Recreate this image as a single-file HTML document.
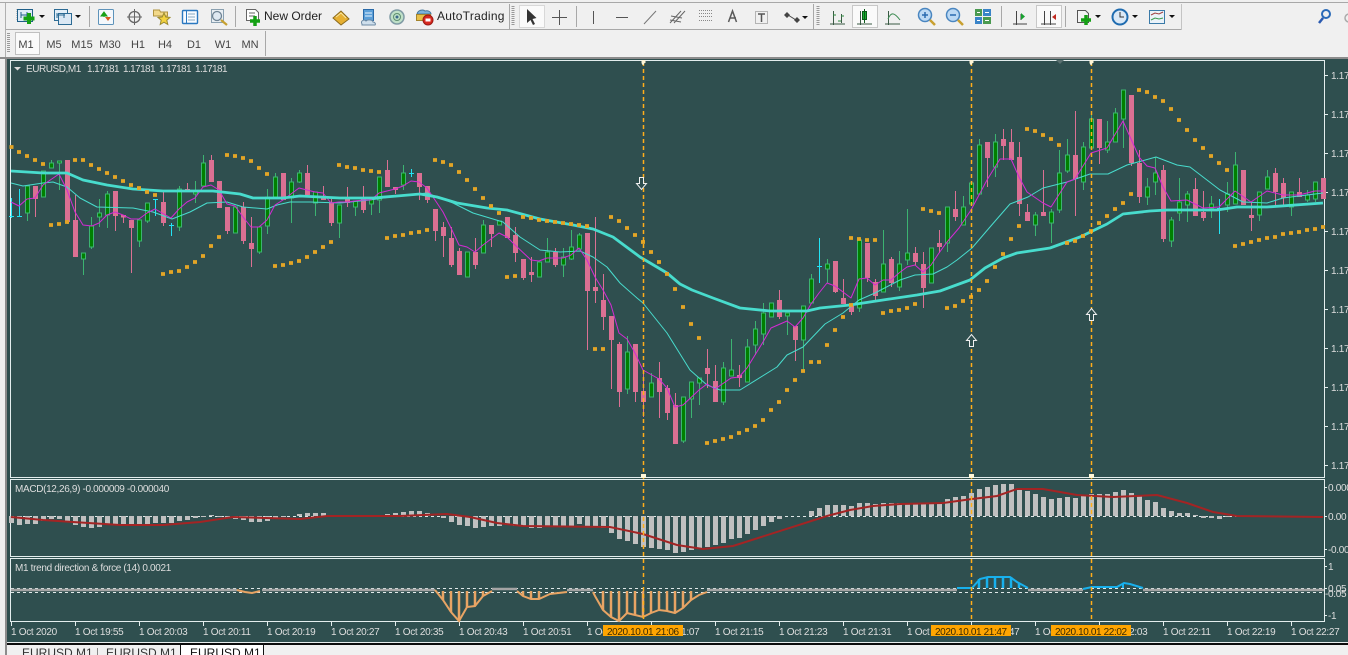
<!DOCTYPE html>
<html><head><meta charset="utf-8"><title>EURUSD,M1</title>
<style>
html,body{margin:0;padding:0;width:1348px;height:655px;overflow:hidden;background:#f0f0f0}
svg{display:block;font-family:"Liberation Sans",sans-serif}
.c{font-size:10px;fill:#dedede;letter-spacing:-.3px}
.t{font-size:11px;fill:#444}
.b{font-size:12px;fill:#222}
.o{font-size:10px;fill:#3a2a00;letter-spacing:-.1px}
</style></head><body>
<svg width="1348" height="655" viewBox="0 0 1348 655" xmlns="http://www.w3.org/2000/svg">
<!-- window chrome -->
<rect width="1348" height="655" fill="#f0f0f0"/>
<rect x="0" y="2" width="1348" height="1" fill="#a8a8a8"/>
<rect x="6" y="29" width="1175" height="1" fill="#a8a8a8"/>
<rect x="1181" y="4" width="1" height="26" fill="#c4c4c4"/>
<rect x="5" y="3" width="1" height="55" fill="#b0b0b0"/>
<rect x="0" y="57" width="1348" height="2" fill="#8c8c8c"/>
<rect x="5" y="57" width="2" height="598" fill="#8c8c8c"/>
<path d="M18 9v11M8.500 33v20M513 6v19M818 6v19" stroke="#999" stroke-width="3" stroke-dasharray="1 1"/>
<path d="M89.500 6v21M235.500 6v21M509.500 4v25M576.500 6v21M813.500 4v25M1001.500 6v21M1065.500 6v21M265.500 31v25" stroke="#a8a8a8"/>
<!-- selected buttons -->
<rect x="15.500" y="32.500" width="24" height="22" fill="#fafafa" stroke="#c0c0c0"/>
<rect x="519.500" y="5.500" width="25" height="22" fill="#fafafa" stroke="#d8d8d8"/>
<rect x="852.500" y="5.500" width="25" height="22" fill="#fafafa" stroke="#c8c8c8"/>
<rect x="1036.500" y="5.500" width="25" height="22" fill="#fafafa" stroke="#c8c8c8"/>
<!-- toolbar icons -->
<g fill="none">
<rect x="17.500" y="9.500" width="15" height="12" fill="#dcebf7" stroke="#1f5f88"/>
<path d="M21 12v6M21 15h7M27 12v6" stroke="#1f5f88"/>
<path d="M29 13v11M23.500 18.500h11" stroke="#14a014" stroke-width="4"/>
<path d="M39 15h6l-3 3z" fill="#111"/>
<rect x="54.500" y="9.500" width="13" height="11" fill="#e4eff8" stroke="#2c6b94"/>
<rect x="58.500" y="13.500" width="13" height="11" fill="#dbe8f4" stroke="#2c6b94"/>
<path d="M57 13v5M57 15h8M64 13v5" stroke="#2c6b94"/>
<path d="M75 15h6l-3 3z" fill="#111"/>
<rect x="98.500" y="9.500" width="15" height="15" rx="1" fill="#f4f8fc" stroke="#5e93ba"/>
<path d="M104 12l3 4h-6zM104 15v2" fill="#18a018" stroke="#18a018"/>
<path d="M108 21l-3-4h6z" fill="#d85a20"/>
<circle cx="134.500" cy="17" r="5.500" stroke="#666" stroke-width="1.300"/>
<path d="M134.500 9v16M127 17h15" stroke="#666"/>
<path d="M153.500 10h6l1 2h7v4h-14z" fill="#f2d98a" stroke="#b09440"/>
<path d="M164 13l1.800 4 4.200.400-3.200 2.800 1 4.300-3.800-2.300-3.800 2.300 1-4.300-3.200-2.800 4.200-.400z" fill="#f4d340" stroke="#9a8a30"/>
<rect x="182.500" y="10.500" width="15" height="13" rx="1" fill="#f8fbff" stroke="#2a78c0" stroke-width="1.400"/>
<path d="M186.500 11v12" stroke="#2a78c0"/>
<path d="M188 14h7M188 17h7M188 20h7" stroke="#89a8c0"/>
<rect x="211.500" y="9.500" width="12" height="13" fill="#e8eef3" stroke="#8aa0b0"/>
<circle cx="217" cy="16" r="4.500" fill="#dfe9f2" stroke="#6f8494" stroke-width="1.300"/>
<path d="M221 20l6 5" stroke="#c6a030" stroke-width="2.200"/>
<path d="M246.500 9.500h9l3 3v8h-12z" fill="#fff" stroke="#666"/>
<path d="M249 13h6M249 16h6" stroke="#666"/>
<path d="M255 16v10M250 21h10" stroke="#14a014" stroke-width="3.500"/>
<path d="M333 18l8-7 8 8-8 6z" fill="#e6b033" stroke="#8a6a1e"/>
<path d="M336 17l5-4 5 5" stroke="#f8e6a0"/>
<rect x="363.500" y="9.500" width="10" height="11" fill="#5b9fd8" stroke="#2a6aa8"/>
<path d="M365 13h7M365 16h7" stroke="#e8f4ff"/>
<path d="M362 24c-2-3 2-5 4-3 2-2 7-1 7 1 2 0 3 2 2 3h-13z" fill="#cfdfec" stroke="#6c8aa4"/>
<circle cx="397" cy="17" r="7" fill="#bfe0c8" stroke="#7f9aa4" stroke-width="1.500"/>
<circle cx="397" cy="17" r="3.500" stroke="#5f8f70"/>
<circle cx="397" cy="17" r="1.500" fill="#3c6a8a"/>
<path d="M417 14c1-4 6-5 8-3 3-1 6 1 6 3z" fill="#7db4dc" stroke="#48789c"/>
<rect x="416.500" y="14.500" width="14" height="6" fill="#e8c048" stroke="#a4842c"/>
<circle cx="428" cy="20" r="5" fill="#d82a20" stroke="#9a1a14"/>
<rect x="425.500" y="18.500" width="5" height="3" fill="#fff"/>
<!-- cursor & drawing tools -->
<path d="M527 9v14l3.500-3 2.500 5 2-1-2.500-5 4-1z" fill="#333"/>
<path d="M559.500 10v15M552 17.500h15" stroke="#555"/>
<path d="M593.500 11v13" stroke="#555"/>
<path d="M616 17.500h12" stroke="#555"/>
<path d="M644 24l12-13" stroke="#777"/>
<path d="M670 23l11-12M674 23l11-12M671 16l11 2M670 20l11 2" stroke="#666"/>
<path d="M699 10.500h13M699 13.500h13M699 16.500h13M699 20.500h13" stroke="#888" stroke-dasharray="1 1"/>
<path d="M728.500 22l4-11 4 11M730 18h6" stroke="#5a5a5a" stroke-width="1.500"/>
<rect x="755.500" y="11.500" width="12" height="12" stroke="#777" stroke-dasharray="1 1"/>
<path d="M758 14h7M761.500 14v8" stroke="#555" stroke-width="1.500"/>
<path d="M787 12l3 3-3 3-3-3zM797 17l3 3-3 3-3-3z" fill="#444"/>
<path d="M788 15l8 5" stroke="#444"/>
<path d="M802 16h6l-3 3z" fill="#111"/>
<!-- chart types -->
<path d="M830 24h15M833.500 11v14M841.500 14v9" stroke="#3a5a44"/>
<path d="M833 15h3M838 21h3M841 16h3" stroke="#2a8a3a"/>
<path d="M857 24h15M860.500 11v14" stroke="#3a5a44"/>
<rect x="862.500" y="11.500" width="4" height="8" fill="#18b030" stroke="#0a5a18"/>
<path d="M864.500 9v14" stroke="#0a5a18"/>
<path d="M885 24h15M888.500 11v14" stroke="#3a5a44"/>
<path d="M888 19c3-7 6-7 12 1" stroke="#3a8a50"/>
<!-- zoom -->
<circle cx="925" cy="15" r="6.500" fill="#bcd9f4" stroke="#4a86c0" stroke-width="1.500"/>
<path d="M922 15h6M925 12v6" stroke="#2a6ab0" stroke-width="1.500"/>
<path d="M930 20l5 5" stroke="#c8a030" stroke-width="2.500"/>
<circle cx="953" cy="15" r="6.500" fill="#bcd9f4" stroke="#4a86c0" stroke-width="1.500"/>
<path d="M950 15h6" stroke="#2a6ab0" stroke-width="1.500"/>
<path d="M958 20l5 5" stroke="#c8a030" stroke-width="2.500"/>
<rect x="975" y="9" width="7" height="7" fill="#4a9a50"/><rect x="983" y="9" width="8" height="7" fill="#3a84c8"/>
<rect x="975" y="17" width="7" height="7" fill="#3a84c8"/><rect x="983" y="17" width="8" height="7" fill="#4a9a50"/>
<path d="M977 12.500h3M985 12.500h4M977 20.500h3M985 20.500h4" stroke="#fff"/>
<path d="M1013 24h14M1016.500 11v14M1021 14v6" stroke="#444"/>
<path d="M1021 13l4 3.500-4 3.500z" fill="#18a030"/>
<path d="M1041 24h15M1044.500 11v14M1050.500 11v14" stroke="#444"/>
<path d="M1056 14l-4 3 4 3z" fill="#c02a20"/>
<path d="M1077.500 10.500h8l3 3v9h-11z" fill="#f4f4f4" stroke="#555"/>
<path d="M1086 15v10M1081 20h10" stroke="#14a014" stroke-width="3.500"/>
<path d="M1095 15h6l-3 3z" fill="#111"/>
<circle cx="1120" cy="17" r="7.500" fill="#dbe9f6" stroke="#1f6cb0" stroke-width="2"/>
<path d="M1120 12v5h4" stroke="#333"/>
<path d="M1132 15h6l-3 3z" fill="#111"/>
<rect x="1149.500" y="10.500" width="15" height="13" fill="#eaf2f9" stroke="#3a7aa8"/>
<path d="M1151 15l4-2 4 1 4-2" stroke="#a04040"/><path d="M1151 20l4-2 4 1 4-1" stroke="#3a9a50"/>
<path d="M1169 15h6l-3 3z" fill="#111"/>
<circle cx="1326" cy="14" r="4" stroke="#2a6ab8" stroke-width="2"/>
<path d="M1323 18l-4 5" stroke="#2a5ab0" stroke-width="2.500"/>
<circle cx="1349" cy="18" r="4" stroke="#aaa" stroke-width="1.500"/>
</g>
<text x="264" y="20" class="b">New Order</text>
<text x="437" y="20" class="b" letter-spacing=".25">AutoTrading</text>
<g class="t" text-anchor="middle">
<text x="26" y="48">M1</text><text x="54" y="48">M5</text><text x="82" y="48">M15</text><text x="110" y="48">M30</text><text x="138" y="48">H1</text><text x="165" y="48">H4</text><text x="194" y="48">D1</text><text x="223" y="48">W1</text><text x="250" y="48">MN</text>
</g>

<!-- chart background -->
<rect x="7" y="59" width="1341" height="583" fill="#2f4f4f"/>
<g fill="none" stroke="#e4eeee">
<path d="M10.500 60.500H1324.500V477.500H10.500ZM10.500 479.500H1324.500V556.500H10.500ZM10.500 558.500H1324.500V621.500H10.500Z"/>
<path d="M1324 75.500h4M1324 114.500h4M1324 153.500h4M1324 192.500h4M1324 231.500h4M1324 270.500h4M1324 309.500h4M1324 348.500h4M1324 387.500h4M1324 426.500h4M1324 465.500h4M1324 487.500h3M1324 516.500h3M1324 549.500h3M1324 566.500h3M1324 588.500h3M1324 615.500h3"/>
<path d="M11.500 621v5M75.500 621v5M139.500 621v5M203.500 621v5M267.500 621v5M331.500 621v5M395.500 621v5M459.500 621v5M523.500 621v5M587.500 621v5M651.500 621v5M715.500 621v5M779.500 621v5M843.500 621v5M907.500 621v5M971.500 621v5M1035.500 621v5M1099.500 621v5M1163.500 621v5M1227.500 621v5M1291.500 621v5"/>
</g>
<path d="M1056 60h8l-4 4z" fill="#5a7070"/>

<!-- wicks -->
<g fill="none" stroke-width="1" shape-rendering="crispEdges">
<path stroke="#db7093" d="M35.500 186V217M67.500 160V224M75.500 195V257M115.500 191V231M123.500 215V223M131.500 220V273M163.500 190V226M187.500 183V192M211.500 155V182M227.500 207V234M243.500 202V244M251.500 217V267M307.500 165V195M323.500 186V200M331.500 199V226M347.500 187V207M363.500 186V213M387.500 160V187M395.500 187V194M419.500 173V200M427.500 186V203M435.500 209V241M443.500 222V257M451.500 227V267M459.500 248V275M475.500 238V269M491.500 225V247M515.500 227V262M523.500 259V280M531.500 257V282M555.500 248V267M587.500 233V350M595.500 217V303M603.500 274V330M611.500 316V389M619.500 342V407M635.500 344V402M643.500 373V417M659.500 362V418M667.500 385V420M675.500 393V444M707.500 349V388M715.500 365V402M739.500 365V387M779.500 290V319M795.500 326V361M835.500 261V293M843.500 279V304M851.500 304V315M867.500 243V282M875.500 279V301M891.500 257V287M915.500 247V265M923.500 252V308M939.500 230V253M955.500 191V221M987.500 142V187M1003.500 129V160M1011.500 129V160M1019.500 142V216M1027.500 204V221M1043.500 170V216M1075.500 111V216M1099.500 119V164M1131.500 95V166M1139.500 150V203M1163.500 165V242M1195.500 178V216M1203.500 191V221M1251.500 202V231M1275.500 168V205M1283.500 178V205M1299.500 178V197"/>
<path stroke="#3cb371" d="M27.500 186V221M51.500 160V168M59.500 161V190M83.500 253V275M91.500 217V249M99.500 199V227M107.500 191V228M139.500 220V247M147.500 203V223M179.500 186V231M195.500 181V203M203.500 155V187M259.500 227V254M267.500 189V234M275.500 173V198M291.500 178V223M299.500 170V183M315.500 192V216M339.500 205V238M355.500 201V216M371.500 199V215M379.500 177V213M403.500 165V190M483.500 220V253M547.500 238V262M563.500 248V277M571.500 230V260M579.500 233V249M627.500 336V394M651.500 373V397M683.500 397V443M691.500 382V418M699.500 378V405M723.500 362V405M731.500 339V376M747.500 339V382M755.500 321V355M763.500 303V345M787.500 313V335M803.500 306V370M811.500 274V303M827.500 259V283M859.500 237V312M883.500 230V292M899.500 251V291M907.500 209V265M947.500 207V252M963.500 196V225M979.500 139V194M995.500 134V177M1035.500 212V236M1051.500 209V243M1059.500 150V213M1067.500 139V173M1083.500 142V190M1091.500 111V148M1107.500 121V153M1115.500 108V142M1123.500 90V148M1147.500 178V205M1155.500 157V195M1171.500 217V247M1179.500 178V221M1187.500 191V222M1211.500 196V218M1227.500 182V212M1235.500 152V204M1259.500 192V221M1267.500 170V189M1291.500 192V216M1307.500 190V202M1315.500 182V202"/>
<!-- pink bodies -->
<path stroke="#db7093" stroke-width="5" d="M35.500 186V199M67.500 160V222M75.500 220V257M115.500 191V216M123.500 215V217.500M131.500 220V228M163.500 202V223M187.500 189V192M211.500 160V182M219.500 181V208M227.500 207V231M243.500 207V241M251.500 243V249M283.500 173V200M307.500 173V195M323.500 198V200M331.500 203V223M347.500 199V203M363.500 199V210M387.500 170V187M395.500 187V190M419.500 173V187M427.500 186V200M435.500 209V231M443.500 227V236M451.500 238V265M459.500 251V275M475.500 252V265M491.500 225V234M507.500 217V238M515.500 235V253M523.500 259V278M531.500 272V275M555.500 252V265M587.500 233V291M595.500 287V291M603.500 300V317M611.500 316V340M619.500 344V392M635.500 344V392M643.500 391V402M659.500 378V392M667.500 388V413M675.500 405V444M707.500 368V374M715.500 381V402M739.500 375V378M779.500 300V317M795.500 326V340M835.500 261V292M843.500 298V304M851.500 304V312M867.500 243V278M875.500 282V296M891.500 259V283M915.500 253V262M923.500 264V288M939.500 243V247M955.500 209V217M987.500 142V158M1003.500 139V146M1011.500 142V160M1019.500 157V204M1027.500 212V221M1043.500 212V216M1075.500 155V179M1099.500 119V148M1131.500 95V163M1139.500 163V197M1163.500 170V239M1195.500 189V216M1203.500 212V218M1243.500 170V205M1251.500 215V218M1275.500 173V192M1283.500 183V198M1299.500 192V197M1323.500 178V199"/>
<!-- green bodies -->
<path fill="#008000" stroke="#3cb371" d="M25.500 186h4v27h-4zM41.500 171h4v26h-4zM49.500 163h4v5h-4zM57.500 161h4v2h-4zM81.500 253h4v6h-4zM89.500 226h4v21h-4zM97.500 213h4v4h-4zM105.500 194h4v21h-4zM137.500 220h4v21h-4zM145.500 203h4v18h-4zM177.500 189h4v38h-4zM193.500 192h4v2h-4zM201.500 163h4v23h-4zM233.500 207h4v26h-4zM257.500 227h4v25h-4zM265.500 197h4v29h-4zM273.500 177h4v20h-4zM289.500 182h4v16h-4zM297.500 173h4v9h-4zM313.500 192h4v11h-4zM337.500 205h4v18h-4zM353.500 201h4v6h-4zM369.500 199h4v5h-4zM377.500 177h4v23h-4zM401.500 173h4v12h-4zM465.500 252h4v25h-4zM481.500 225h4v28h-4zM497.500 221h4v4h-4zM537.500 262h4v15h-4zM545.500 252h4v10h-4zM561.500 257h4v8h-4zM569.500 247h4v12h-4zM577.500 235h4v14h-4zM625.500 352h4v37h-4zM649.500 383h4v14h-4zM681.500 397h4v44h-4zM689.500 382h4v17h-4zM697.500 378h4v5h-4zM721.500 368h4v34h-4zM729.500 370h4v6h-4zM745.500 347h4v35h-4zM753.500 329h4v16h-4zM761.500 313h4v21h-4zM769.500 303h4v14h-4zM785.500 313h4v3h-4zM801.500 306h4v34h-4zM809.500 279h4v24h-4zM825.500 264h4v5h-4zM857.500 240h4v68h-4zM881.500 264h4v28h-4zM897.500 264h4v23h-4zM905.500 253h4v7h-4zM929.500 248h4v35h-4zM945.500 207h4v36h-4zM961.500 207h4v18h-4zM969.500 183h4v21h-4zM977.500 145h4v49h-4zM993.500 142h4v25h-4zM1033.500 215h4v10h-4zM1049.500 212h4v11h-4zM1057.500 173h4v37h-4zM1065.500 155h4v16h-4zM1081.500 147h4v35h-4zM1089.500 119h4v29h-4zM1105.500 142h4v8h-4zM1113.500 113h4v29h-4zM1121.500 90h4v29h-4zM1145.500 187h4v10h-4zM1153.500 173h4v9h-4zM1169.500 220h4v21h-4zM1177.500 202h4v11h-4zM1185.500 194h4v11h-4zM1209.500 204h4v4h-4zM1225.500 194h4v11h-4zM1233.500 165h4v39h-4zM1257.500 192h4v23h-4zM1265.500 177h4v12h-4zM1289.500 192h4v15h-4zM1305.500 195h4v5h-4zM1313.500 182h4v17h-4z"/>
<!-- doji -->
<path stroke="#22e4f4" d="M11.500 198V218M9 216.500h5M19.500 189V217M17 216.500h5M155.500 199V216M153 199.500h5M171.500 223V236M169 225.500h5M411.500 169V177M409 173.500h5M819.500 238V283M817 266.500h5M1219.500 199V234M1217 208.500h5"/>
</g>

<!-- moving averages -->
<g fill="none" stroke-linejoin="round">
<polyline stroke="#48dccd" stroke-width="1" points="11,183 23,186 43,183 53,182 67,187 80,198 97,207 133,208 153,212 172,219 190,212 207,203 227,202 243,207 267,209 277,205 290,202 310,202 340,203 370,200 397,196 427,193 453,203 473,213 503,222 520,237 540,250 560,252 580,251 593,257 607,267 620,283 637,298 643,303 667,333 690,370 707,385 720,390 740,390 777,367 787,355 803,347 825,324 843,313 859,300 875,293 900,280 915,275 933,274 947,267 957,260 972,248 990,227 1010,204 1028,197 1043,188 1067,182 1090,174 1108,174 1127,165 1156,157 1177,165 1190,167 1220,190 1243,202 1267,203 1283,198 1323,193"/>
<polyline stroke="#d42ad4" stroke-width="1" points="11,202 19,206 27,199 35,198 43,185 59,174 67,190 75,212 83,225 92,226 99,223 107,215 115,212 123,215 131,219 139,219 147,213 155,209 171,218 179,209 187,202 195,198 203,187 211,185 219,190 227,204 235,206 243,217 251,227 259,227 267,220 275,205 283,200 299,188 315,192 323,193 331,203 339,202 347,202 363,200 371,200 379,193 395,189 403,186 411,181 419,182 427,188 443,212 451,228 459,245 467,247 475,252 483,245 491,239 499,233 507,237 515,245 531,260 539,261 547,258 563,258 571,255 579,248 587,260 595,277 603,290 611,305 619,333 627,339 635,353 643,370 659,379 667,388 675,407 683,405 699,390 707,384 715,389 731,378 739,377 747,368 763,342 771,328 787,321 795,327 803,318 811,304 819,293 827,283 835,286 851,298 859,279 867,278 875,285 883,280 891,280 899,273 907,267 915,265 923,272 931,265 939,253 947,242 959,228 971,210 987,180 1000,159 1011,159 1019,177 1027,192 1043,203 1051,207 1067,182 1075,179 1091,153 1107,148 1123,121 1139,157 1147,166 1155,168 1163,187 1171,201 1187,200 1203,208 1219,207 1235,191 1251,202 1267,191 1283,195 1299,195 1315,191 1323,191"/>
<polyline stroke="#48dccd" stroke-width="2.800" points="11,171 43,173 67,173 83,180 107,185 133,189 163,191 200,191 213,191 240,194 253,198 283,198 300,196 340,198 373,198 397,196 420,194 437,197 457,203 487,208 507,210 540,219 573,225 593,229 613,237 640,257 667,273 680,284 692,290 713,298 740,308 770,311 807,311 820,308 850,305 883,300 917,295 940,291 970,280 985,268 1003,258 1017,253 1050,248 1080,237 1107,224 1123,214 1150,211 1167,210 1217,210 1237,207 1267,207 1323,203"/>
</g>

<!-- parabolic SAR -->
<path fill="none" stroke="#e3a526" stroke-width="3.800" stroke-linecap="butt" d="M9.500 147h4M17 152h4M25 156h4M33 160h4M41 164h4M49 225h4M57 224h4M65 222h4M73 160h4M81 160h4M89 165h4M97 169h4M105 173h4M113 177h4M121 181h4M129 185h4M137 188h4M145 192h4M153 195h4M161 274h4M169 272h4M177 271h4M185 267h4M193 262h4M201 256h4M209 246h4M217 237h4M225 155h4M233 156h4M241 158h4M249 161h4M257 168h4M265 174h4M273 266h4M281 265h4M289 263h4M297 261h4M305 257h4M313 252h4M321 247h4M329 242h4M337 165h4M345 167h4M353 168h4M361 170h4M369 171h4M377 172h4M385 238h4M393 236h4M401 235h4M409 233h4M417 232h4M425 230h4M433 160h4M441 162h4M449 165h4M457 172h4M465 180h4M473 189h4M481 198h4M489 206h4M497 213h4M505 277h4M513 276h4M521 217h4M529 218h4M537 220h4M545 221h4M553 222h4M561 223h4M569 224h4M577 225h4M585 226h4M593 349h4M601 349h4M609 217h4M617 221h4M625 228h4M633 235h4M641 242h4M649 252h4M657 262h4M665 274h4M673 289h4M681 307h4M689 324h4M697 338h4M705 443h4M713 441h4M721 439h4M729 437h4M737 433h4M745 430h4M753 426h4M761 420h4M769 410h4M777 402h4M785 390h4M793 380h4M801 371h4M809 362h4M817 362h4M825 345h4M833 330h4M841 317h4M849 305h4M849 238h4M857 239h4M865 240h4M873 240h4M881 313h4M889 311h4M897 310h4M905 308h4M913 304h4M921 209h4M929 211h4M937 213h4M945 308h4M953 306h4M961 301h4M969 297h4M977 290h4M985 281h4M993 267h4M1001 254h4M1009 239h4M1017 226h4M1025 129h4M1033 131h4M1041 135h4M1049 139h4M1057 145h4M1065 243h4M1073 241h4M1081 236h4M1089 231h4M1097 223h4M1105 216h4M1113 209h4M1121 203h4M1129 194h4M1137 90h4M1145 92h4M1153 97h4M1161 101h4M1169 109h4M1177 120h4M1185 130h4M1193 140h4M1201 148h4M1209 156h4M1217 163h4M1225 170h4M1233 246h4M1241 244h4M1249 242h4M1257 240h4M1265 238h4M1273 237h4M1281 234h4M1289 233h4M1297 232h4M1305 230h4M1313 229h4M1321 227h4"/>

<!-- MACD pane -->
<path d="M11 516.500H1324" stroke="#dfe8e8" stroke-dasharray="3 3"/>
<path fill="none" stroke="#c0c0c0" stroke-width="5" shape-rendering="crispEdges" d="M11.500 516V523M19.500 516V525M27.500 516V524M35.500 516V524M43.500 516V521M51.500 516V519M59.500 516V519M67.500 516V521M75.500 516V525M83.500 516V527M91.500 516V528M99.500 516V527M107.500 516V525M115.500 516V525M123.500 516V526M131.500 516V526M139.500 516V525M147.500 516V524M155.500 516V523M163.500 516V523M171.500 516V523M179.500 516V521M187.500 516V520M195.500 516V518M203.500 516V517M211.500 516V515M219.500 516V517M227.500 516V518M235.500 516V519M243.500 516V520M251.500 516V522M259.500 516V522M267.500 516V521M275.500 516V518M283.500 516V517M299.500 516V514M307.500 516V513M315.500 516V513M323.500 516V513M387.500 516V514M395.500 516V513M403.500 516V512M411.500 516V511M419.500 516V511M427.500 516V513M443.500 516V518M451.500 516V522M459.500 516V525M467.500 516V526M475.500 516V528M483.500 516V527M491.500 516V526M499.500 516V526M507.500 516V525M515.500 516V526M523.500 516V526M531.500 516V528M539.500 516V528M547.500 516V527M555.500 516V527M563.500 516V526M571.500 516V526M579.500 516V524M587.500 516V526M595.500 516V527M603.500 516V528M611.500 516V533M619.500 516V539M627.500 516V541M635.500 516V544M643.500 516V547M651.500 516V548M659.500 516V549M667.500 516V550M675.500 516V553M683.500 516V552M691.500 516V550M699.500 516V549M707.500 516V547M715.500 516V545M723.500 516V543M731.500 516V539M739.500 516V538M747.500 516V534M755.500 516V530M763.500 516V526M771.500 516V522M779.500 516V519M811.500 516V511M819.500 516V508M827.500 516V505M835.500 516V505M843.500 516V505M851.500 516V506M859.500 516V503M867.500 516V503M875.500 516V504M883.500 516V503M891.500 516V503M899.500 516V503M907.500 516V503M915.500 516V503M923.500 516V504M931.500 516V503M939.500 516V503M947.500 516V499M955.500 516V497M963.500 516V496M971.500 516V493M979.500 516V489M987.500 516V487M995.500 516V485M1003.500 516V484M1011.500 516V484M1019.500 516V488M1027.500 516V491M1035.500 516V494M1043.500 516V497M1051.500 516V499M1059.500 516V498M1067.500 516V497M1075.500 516V498M1083.500 516V496M1091.500 516V494M1099.500 516V494M1107.500 516V494M1115.500 516V492M1123.500 516V490M1131.500 516V493M1139.500 516V496M1147.500 516V500M1155.500 516V502M1163.500 516V508M1171.500 516V511M1179.500 516V513M1187.500 516V513M1195.500 516V515M1203.500 516V518M1211.500 516V518M1219.500 516V519M1227.500 516V517"/>
<polyline fill="none" stroke="#a32424" stroke-width="2" points="11,517 43,520 73,522 120,525 163,525 200,522 233,517 300,519 327,516 400,516 447,514 470,517 497,523 523,526 610,527 643,534 677,545 703,549 733,546 827,516 850,510 873,506 900,504 943,503 972,499 997,496 1017,489 1043,489 1077,495 1113,497 1157,495 1187,503 1213,512 1237,516 1323,517"/>

<!-- trend pane -->
<path d="M11 588.500H1324M11 592.500H1324" stroke="#dfe8e8" stroke-dasharray="3 3"/>
<path d="M11 590H237M262 590H435M492 589H517M567 590H593M707 590H957M1028 590H1083M1143 590H1324" stroke="#a4a4a4" stroke-width="2.500"/>
<g fill="none" stroke="#e8a464">
<path d="M237 590l8 2 7 1 8-2" stroke-width="2"/>
<polyline stroke-width="2" points="435,590 443,600 451,612 459,621 467,607 475,606 483,596 492,591"/>
<polyline stroke-width="2" points="517,591 523,596 531,599 539,599 550,594 567,592"/>
<polyline stroke-width="2" points="593,592 595,596 603,610 611,617 619,621 627,613 635,615 643,617 651,613 659,610 667,611 675,613 683,608 691,600 699,595 707,592"/>
<path stroke-width="2.500" d="M443 591v9M451 591v21M459 591v30M467 591v16M475 591v15M483 591v5M523 591v5M531 591v8M539 591v8M603 591v19M611 591v26M619 591v30M627 591v22M635 591v24M643 591v26M651 591v22M659 591v19M667 591v20M675 591v22M683 591v17M691 591v9"/>
</g>
<g fill="none" stroke="#18b0ec">
<polyline stroke-width="2" points="957,588 972,588 980,579 988,577 1010,577 1017,582 1028,588"/>
<path stroke-width="2.500" d="M979 588v-9M987 588v-11M995 588v-11M1003 588v-11M1011 588v-11M1019 588v-5"/>
<polyline stroke-width="2" points="1083,589 1092,587 1117,587 1124,583 1130,584 1143,588"/>
<path stroke-width="2" d="M1123 588v-4"/>
</g>

<!-- vertical event lines -->
<path d="M643.500 62V622M971.500 62V622M1091.500 62V622" stroke="#ffae1a" stroke-width="1.500" stroke-dasharray="4 3" fill="none"/>
<path d="M641.500 60h4v3h-1l-1 2h-1l-1-2zM969.500 60h4v3h-1l-1 2h-1l-1-2zM1089.500 60h4v3h-1l-1 2h-1l-1-2zM641 474h5v4h-5zM969 474h5v4h-5zM1089 474h5v4h-5z" fill="#fff6d8"/>
<g fill="#2f4f4f" stroke="#f0f0f0" stroke-width="1">
<path d="M639.500 177.500h4v6h3l-5 6-5-6h3z"/>
<path d="M969.500 346.500h4v-6h3l-5-6-5 6h3z"/>
<path d="M1089.500 320.500h4v-6h3l-5-6-5 6h3z"/>
</g>

<!-- labels -->
<path d="M14 67h7l-3.500 3.500z" fill="#dedede"/>
<g class="c">
<text x="26" y="72" style="letter-spacing:-.45px">EURUSD,M1</text>
<text x="87" y="72" style="letter-spacing:-.6px">1.17181</text>
<text x="123" y="72" style="letter-spacing:-.6px">1.17181</text>
<text x="159" y="72" style="letter-spacing:-.6px">1.17181</text>
<text x="195" y="72" style="letter-spacing:-.6px">1.17181</text>
<text x="15" y="492" textLength="154" lengthAdjust="spacing">MACD(12,26,9) -0.000009 -0.000040</text>
<text x="15" y="571" textLength="156" lengthAdjust="spacing">M1 trend direction &amp; force (14) 0.0021</text>
<text x="1331" y="79">1.17</text><text x="1331" y="118">1.17</text><text x="1331" y="157">1.17</text><text x="1331" y="196">1.17</text><text x="1331" y="235">1.17</text><text x="1331" y="274">1.17</text><text x="1331" y="313">1.17</text><text x="1331" y="352">1.17</text><text x="1331" y="391">1.17</text><text x="1331" y="430">1.17</text><text x="1331" y="469">1.17</text>
<text x="1328" y="491">0.000</text><text x="1328" y="520">0.00</text><text x="1328" y="553">-0.00</text>
<text x="1328" y="570">1</text><text x="1328" y="592">0.05</text><text x="1325" y="597">-0.05</text><text x="1328" y="619">-1</text>
<text x="11" y="635">1 Oct 2020</text><text x="75" y="635">1 Oct 19:55</text><text x="139" y="635">1 Oct 20:03</text><text x="203" y="635">1 Oct 20:11</text><text x="267" y="635">1 Oct 20:19</text><text x="331" y="635">1 Oct 20:27</text><text x="395" y="635">1 Oct 20:35</text><text x="459" y="635">1 Oct 20:43</text><text x="523" y="635">1 Oct 20:51</text><text x="587" y="635">1 Oct 20:59</text><text x="651" y="635">1 Oct 21:07</text><text x="715" y="635">1 Oct 21:15</text><text x="779" y="635">1 Oct 21:23</text><text x="843" y="635">1 Oct 21:31</text><text x="907" y="635">1 Oct 21:39</text><text x="971" y="635">1 Oct 21:47</text><text x="1035" y="635">1 Oct 21:55</text><text x="1099" y="635">1 Oct 22:03</text><text x="1163" y="635">1 Oct 22:11</text><text x="1227" y="635">1 Oct 22:19</text><text x="1291" y="635">1 Oct 22:27</text>
</g>
<rect x="603" y="625" width="80" height="11" fill="#ffa500"/>
<rect x="931" y="625" width="80" height="11" fill="#ffa500"/>
<rect x="1051" y="625" width="80" height="11" fill="#ffa500"/>
<g class="o">
<text x="607" y="635" textLength="72">2020.10.01 21:06</text>
<text x="935" y="635" textLength="72">2020.10.01 21:47</text>
<text x="1055" y="635" textLength="72">2020.10.01 22:02</text>
</g>

<!-- tabs -->
<rect x="7" y="642" width="1341" height="1" fill="#e8eeee"/>
<rect x="7" y="643" width="1341" height="2" fill="#0c0c0c"/>
<rect x="7" y="645" width="1341" height="10" fill="#f0f0f0"/>
<rect x="181" y="645" width="82" height="10" fill="#fff"/>
<path d="M180.500 643v12M263.500 643v12" stroke="#111"/>
<path d="M97.500 648v7" stroke="#888"/>
<g font-size="12" fill="#333">
<text x="22" y="657">EURUSD,M1</text>
<text x="106" y="657">EURUSD,M1</text>
<text x="190" y="657" fill="#111">EURUSD,M1</text>
</g>
</svg>
</body></html>
